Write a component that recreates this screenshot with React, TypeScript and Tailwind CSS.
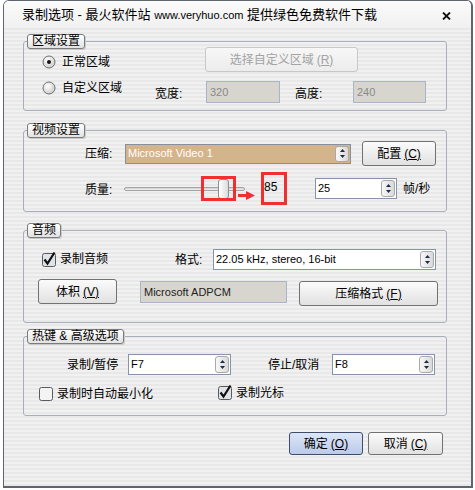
import React from 'react'

const FONT = "font-['Liberation_Sans','Noto_Sans_CJK_SC',sans-serif]"
const STRIPES =
  'bg-[repeating-linear-gradient(180deg,#f1f1f1_0px,#f1f1f1_2px,#e8e8e8_2px,#e8e8e8_4px)]'

function Legend({ children }: { children: React.ReactNode }) {
  return (
    <legend className="ml-[3px] h-[15px] px-[4px] border border-[#7b7b7b] rounded-[3px] bg-[linear-gradient(#ffffff,#e2e2e2)] shadow-[1px_1px_0_#c9c9c9] text-[12px] leading-[13px] text-black">
      {children}
    </legend>
  )
}

function Group({ label, className = '', children }: { label: React.ReactNode; className?: string; children: React.ReactNode }) {
  return (
    <fieldset className={`w-[424px] border border-[#a7afbc] rounded-[3px] ${className}`}>
      <Legend>{label}</Legend>
      {children}
    </fieldset>
  )
}

function Btn({
  children,
  className = '',
  kind = 'normal',
}: {
  children: React.ReactNode
  className?: string
  kind?: 'normal' | 'primary' | 'disabled'
}) {
  const look =
    kind === 'primary'
      ? 'border-[#3e4d6c] bg-[linear-gradient(#dde6f7,#bccaea)] text-black'
      : kind === 'disabled'
        ? 'border-[#c8c8c8] bg-[linear-gradient(#f7f7f7,#ececec)] text-[#a3a3a3]'
        : 'border-[#727272] bg-[linear-gradient(#fbfbfb,#e1e1e1)] text-black'
  return (
    <button className={`flex shrink-0 items-center justify-center rounded-[3px] border text-[12px] leading-none ${look} ${className}`}>
      {children}
    </button>
  )
}

function Key({ k }: { k: string }) {
  return <span className="ml-[3px] underline underline-offset-1">({k})</span>
}

function Spinner() {
  return (
    <div className="h-full py-[1px] pr-[1px]">
      <div className="flex h-full w-[14px] flex-col items-center justify-center gap-[3px] rounded-[3px] border border-[#a9a9a9] bg-[linear-gradient(90deg,#f8f8f8,#d9d9d9)]">
        <svg width="5" height="3" viewBox="0 0 5 3">
          <path d="M0 3 L2.5 0 L5 3Z" fill="#1e2b48" />
        </svg>
        <svg width="5" height="3" viewBox="0 0 5 3">
          <path d="M0 0 L2.5 3 L5 0Z" fill="#1e2b48" />
        </svg>
      </div>
    </div>
  )
}

function Combo({ value, className = '', tan = false }: { value: string; className?: string; tan?: boolean }) {
  return (
    <div
      className={`flex shrink-0 items-center border ${
        tan ? 'border-[#8a8e96] bg-[#d3b48c] text-white' : 'border-[#8494aa] bg-white text-black'
      } ${className}`}
    >
      <span className="flex-1 truncate pl-[2px] text-[11px] leading-none">{value}</span>
      <Spinner />
    </div>
  )
}

function Field({ value, className = '', dim = true }: { value: string; className?: string; dim?: boolean }) {
  return (
    <div
      className={`flex shrink-0 border border-[#a9b5c6] bg-[#d8d5ce] pl-[3px] text-[11px] leading-none ${
        dim ? 'items-center text-[#8a8a8a]' : 'items-start pt-[5px] text-[#222]'
      } ${className}`}
    >
      {value}
    </div>
  )
}

function Radio({ checked, label }: { checked?: boolean; label: string }) {
  return (
    <span className="flex items-center gap-[6px] text-[12px] leading-[14px]">
      <svg width="14" height="14" viewBox="0 0 14 14">
        <defs>
          <radialGradient id={checked ? 'rg1' : 'rg2'} cx="0.4" cy="0.35" r="0.7">
            <stop offset="0" stopColor="#ffffff" />
            <stop offset="1" stopColor="#c9c9c9" />
          </radialGradient>
        </defs>
        <circle cx="7" cy="7" r="6" fill={`url(#${checked ? 'rg1' : 'rg2'})`} stroke="#6f6f6f" />
        {checked && <circle cx="7" cy="7" r="2" fill="#111" />}
      </svg>
      {label}
    </span>
  )
}

function Check({ checked, label }: { checked?: boolean; label: string }) {
  return (
    <span className="flex items-center gap-[3px] text-[12px] leading-[14px]">
      <svg width="15" height="15" viewBox="0 0 15 15" className="overflow-visible">
        <rect x="0.5" y="1.5" width="13" height="13" rx="2" fill={checked ? '#dfe3ea' : '#f4f4f4'} stroke="#5a5a5a" />
        {checked && <path d="M2.5 7.5 L5.5 11.5 L12.5 0.5" fill="none" stroke="#111" strokeWidth="2.2" />}
      </svg>
      {label}
    </span>
  )
}

export default function App() {
  return (
    <div className={`h-[490px] w-[475px] bg-white ${FONT}`}>
      <div className="ml-[3px] flex h-[488px] w-[470px] flex-col overflow-hidden rounded-t-[6px] border-t border-l border-r-2 border-b-2 border-[#5f656e]">
        {/* title bar */}
        <div className="flex h-[25px] shrink-0 items-center bg-[linear-gradient(#fbfbfb,#f1f1f1)] pl-[18px] pr-[20px] text-[13px] text-black">
          <span className="flex-1 pt-[3px]">
            录制选项 - 最火软件站 <span className="text-[11px]">www.veryhuo.com</span> 提供绿色免费软件下载
          </span>
          <svg width="9" height="8" viewBox="0 0 9 8" className="mt-[4px]">
            <path d="M1 0.5 L8 7.5 M8 0.5 L1 7.5" stroke="#111" strokeWidth="1.8" />
          </svg>
        </div>

        <div className={`flex flex-1 flex-col pl-[19px] pt-[8px] ${STRIPES}`}>
          {/* 区域设置 */}
          <Group label="区域设置" className="pb-[7px]">
            <div className="flex items-start pl-[18px]">
              <span className="mt-[6px] w-[163px]">
                <Radio checked label="正常区域" />
              </span>
              <Btn kind="disabled" className="-mt-[2px] h-[25px] w-[153px]">
                选择自定义区域<Key k="R" />
              </Btn>
            </div>
            <div className="mt-[9px] flex h-[22px] items-center pl-[18px] text-[12px]">
              <span className="w-[113px] self-start">
                <Radio label="自定义区域" />
              </span>
              <span className="w-[51px] pt-[4px]">宽度:</span>
              <Field value="320" className="h-[22px] w-[74px]" />
              <span className="ml-[15px] w-[58px] pt-[4px]">高度:</span>
              <Field value="240" className="h-[22px] w-[73px]" />
            </div>
          </Group>

          {/* 视频设置 */}
          <Group label="视频设置" className="mt-[12px] pb-[6px]">
            <div className="mt-[3px] flex h-[25px] items-center pl-[61px] text-[12px]">
              <span className="w-[40px]">压缩:</span>
              <Combo tan value="Microsoft Video 1" className="h-[20px] w-[226px]" />
              <Btn className="ml-[11px] h-[25px] w-[74px]">
                配置<Key k="C" />
              </Btn>
            </div>
            <div className="mt-[6px] flex h-[33px] items-center pl-[61px] text-[12px]">
              <span className="w-[39px] pt-[2px]">质量:</span>
              <div className="relative flex h-[33px] w-[121px] items-center">
                <div className="h-[4px] w-full rounded-[2px] border border-[#a3a3a3] bg-[linear-gradient(#cfcfcf,#f3f3f3)]" />
                <div className="absolute left-[94px] top-[7px] h-[20px] w-[11px] rounded-[3px] border border-[#8c8c8c] bg-[linear-gradient(90deg,#ffffff,#dcdcdc)]" />
                <div className="absolute left-[77px] top-[4px] h-[25px] w-[35px] border-[3px] border-[#f03030]" />
                <svg width="17" height="9" viewBox="0 0 17 9" className="absolute left-[114px] top-[19px]">
                  <path d="M0 4.5 H9" stroke="#f03030" strokeWidth="3" />
                  <path d="M8 0 L17 4.5 L8 9Z" fill="#f03030" />
                </svg>
              </div>
              <div className="ml-[16px] h-[33px] w-[26px] shrink-0 border-[3px] border-[#f03030] pt-[5px] text-[12px] leading-[14px]">
                85
              </div>
              <Combo value="25" className="ml-[28px] h-[21px] w-[82px]" />
              <span className="ml-[6px] pt-[1px]">帧/秒</span>
            </div>
          </Group>

          {/* 音频 */}
          <Group label="音频" className="mt-[11px] pb-[16px]">
            <div className="mt-[11px] flex h-[20px] items-center pl-[18px] text-[12px]">
              <span className="w-[133px]">
                <Check checked label="录制音频" />
              </span>
              <span className="w-[38px] pt-[2px]">格式:</span>
              <Combo value="22.05 kHz, stereo, 16-bit" className="h-[21px] w-[223px]" />
            </div>
            <div className="mt-[10px] flex items-start pl-[14px]">
              <Btn className="h-[25px] w-[79px]">
                体积<Key k="V" />
              </Btn>
              <Field dim={false} value="Microsoft ADPCM" className="ml-[23px] mt-[2px] h-[22px] w-[147px]" />
              <Btn className="ml-[12px] mt-[2px] h-[25px] w-[139px]">
                压缩格式<Key k="F" />
              </Btn>
            </div>
          </Group>

          {/* 热键 & 高级选项 */}
          <Group label="热键 & 高级选项" className="mt-[6px] pb-[14px]">
            <div className="mt-[10px] flex h-[21px] items-center pl-[43px] text-[12px]">
              <span className="w-[61px]">录制/暂停</span>
              <Combo value="F7" className="h-[21px] w-[103px]" />
              <span className="ml-[37px] w-[64px]">停止/取消</span>
              <Combo value="F8" className="h-[21px] w-[103px]" />
            </div>
            <div className="mt-[11px] flex h-[15px] items-center pl-[15px]">
              <span className="w-[179px]">
                <Check label="录制时自动最小化" />
              </span>
              <span className="-mt-[2px]">
                <Check checked label="录制光标" />
              </span>
            </div>
          </Group>

          {/* buttons */}
          <div className="mt-[16px] flex w-[424px] justify-end gap-[5px] pr-[4px]">
            <Btn kind="primary" className="h-[23px] w-[74px]">
              确定<Key k="O" />
            </Btn>
            <Btn className="h-[23px] w-[75px]">
              取消<Key k="C" />
            </Btn>
          </div>
        </div>
      </div>
    </div>
  )
}
